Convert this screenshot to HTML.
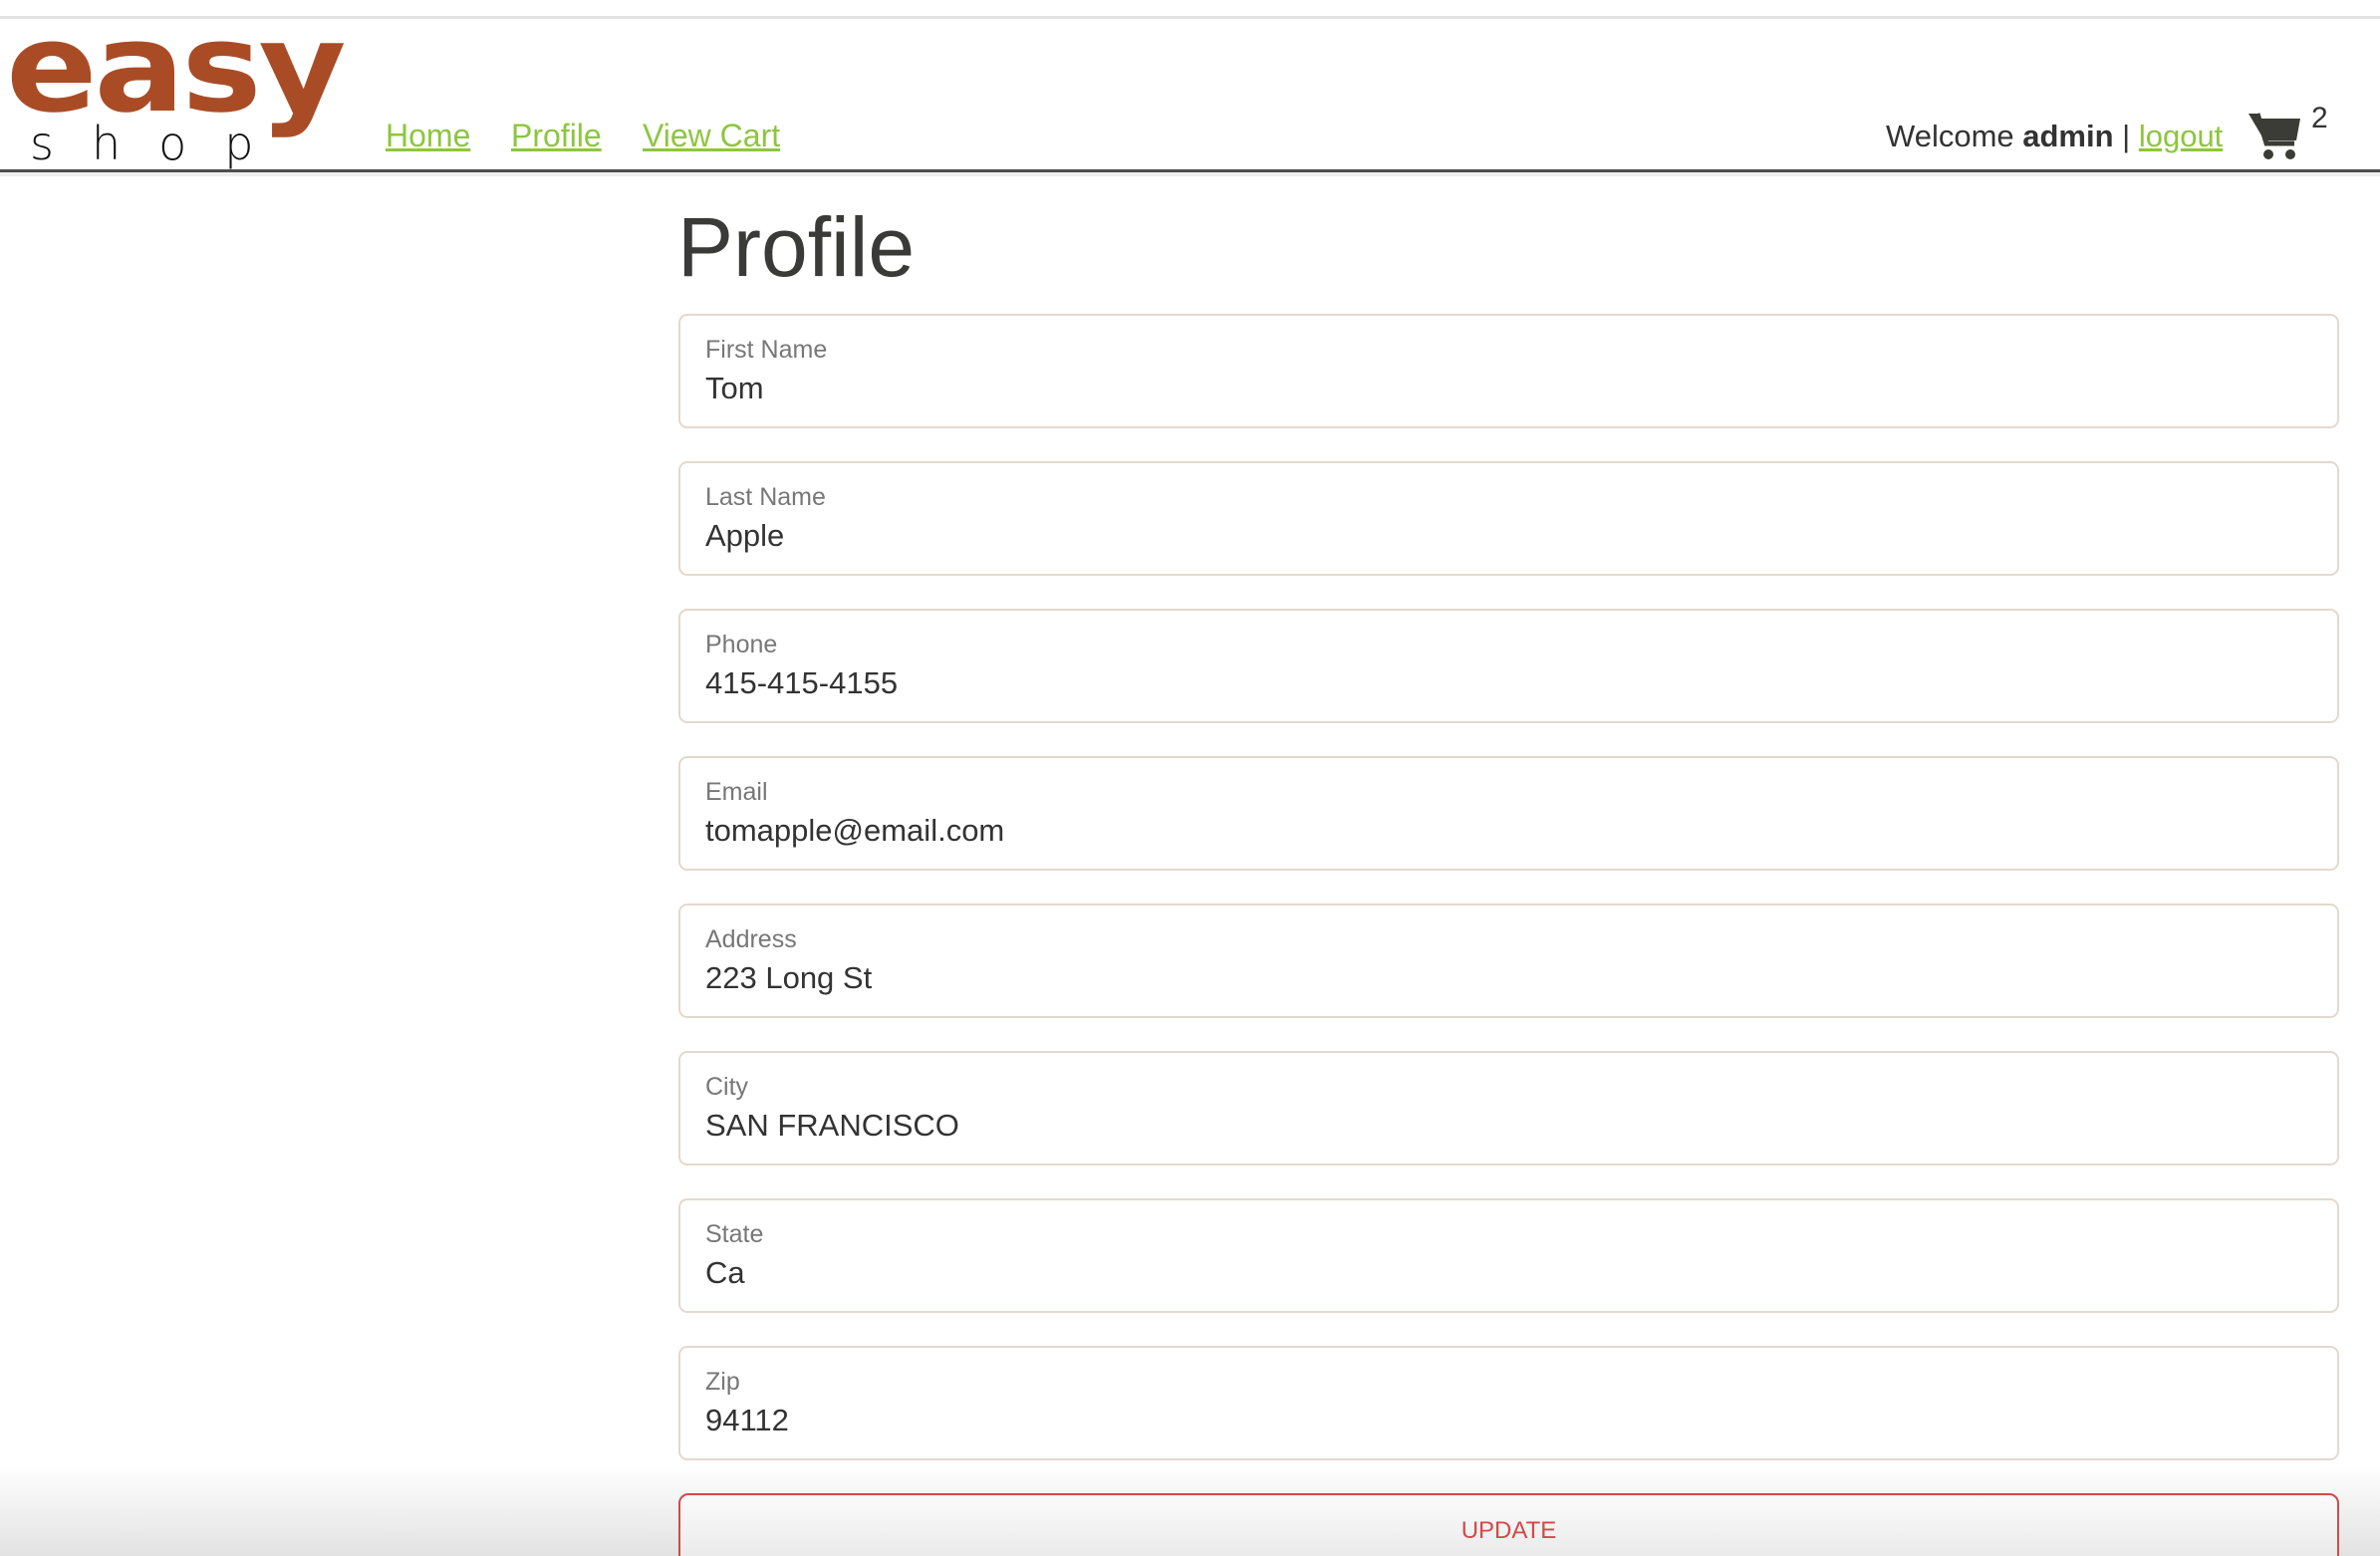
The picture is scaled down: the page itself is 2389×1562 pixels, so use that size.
<!DOCTYPE html>
<html><head><meta charset="utf-8"><style>
*{margin:0;padding:0;box-sizing:border-box}
html,body{width:2389px;height:1562px;overflow:hidden;background:#fff;font-family:"Liberation Sans",sans-serif;color:#333}
body{position:relative;background:linear-gradient(to bottom,#fff 0,#fff 1470px,#e2e2e2 1562px)}
.topline{position:absolute;left:0;top:16px;width:100%;height:3px;background:#e2e2e2}
.hdr{position:absolute;left:0;top:19px;width:100%;height:151px;background:#fff;overflow:hidden}
.hline{position:absolute;left:0;top:170px;width:100%;height:3px;background:#4d4d4d}
.hband{position:absolute;left:0;top:173px;width:100%;height:4px;background:#eee}
.easy{position:absolute;left:6px;top:-22px;font-size:124px;font-weight:bold;color:#a94c26;letter-spacing:-3px;font-family:"DejaVu Sans","Liberation Sans",sans-serif;transform:scaleX(1.09);transform-origin:left}
.shop{position:absolute;left:30px;top:98px;font-size:46px;color:#111;letter-spacing:38px;font-family:"DejaVu Sans",sans-serif;font-weight:300}
.nav{position:absolute;top:118px;font-size:32px;color:#8dc63f;text-decoration:underline}
.welcome{position:absolute;left:1893px;top:119px;font-size:31px;color:#333}
.welcome a{color:#8dc63f;text-decoration:underline}
.cnt{position:absolute;left:2320px;top:102px;font-size:30px;color:#333}
h1{position:absolute;left:680px;top:200px;font-size:84px;font-weight:normal;color:#3a3a38}
.f{position:absolute;left:681px;width:1667px;height:115px;border:2px solid #e3d9cd;border-radius:9px;background:#fff}
.f .l{position:absolute;left:25px;top:20px;font-size:25px;color:#777}
.f .v{position:absolute;left:25px;top:55px;font-size:31px;color:#333}
.btn{position:absolute;left:681px;top:1499px;width:1667px;height:90px;border:2px solid #d04a4a;border-radius:10px;background:linear-gradient(#fbfbfb,#e4e4e4);text-align:center;font-size:24px;color:#d04a4a;padding-top:22px}
</style></head><body>
<div class="topline"></div>
<div class="hdr">
<div class="easy">easy</div>
<div class="shop">shop</div>
</div>
<a class="nav" style="left:387px">Home</a>
<a class="nav" style="left:513px">Profile</a>
<a class="nav" style="left:645px">View Cart</a>
<div class="welcome">Welcome <b>admin</b> | <a>logout</a></div>
<svg style="position:absolute;left:2255px;top:110px" width="56" height="52" viewBox="0 0 56 52"><path d="M2 4h9l3 5h40l-4 22H18z" fill="#3c3c36"/><path d="M11 4l9 30h28" stroke="#3c3c36" stroke-width="5" fill="none"/><circle cx="22" cy="45" r="5" fill="#3c3c36"/><circle cx="44" cy="45" r="5" fill="#3c3c36"/></svg>
<div class="cnt">2</div>
<div class="hline"></div><div class="hband"></div>
<h1>Profile</h1>
<div class="f" style="top:315px"><div class="l">First Name</div><div class="v">Tom</div></div>
<div class="f" style="top:463px"><div class="l">Last Name</div><div class="v">Apple</div></div>
<div class="f" style="top:611px"><div class="l">Phone</div><div class="v">415-415-4155</div></div>
<div class="f" style="top:759px"><div class="l">Email</div><div class="v">tomapple@email.com</div></div>
<div class="f" style="top:907px"><div class="l">Address</div><div class="v">223 Long St</div></div>
<div class="f" style="top:1055px"><div class="l">City</div><div class="v">SAN FRANCISCO</div></div>
<div class="f" style="top:1203px"><div class="l">State</div><div class="v">Ca</div></div>
<div class="f" style="top:1351px"><div class="l">Zip</div><div class="v">94112</div></div>
<div class="btn">UPDATE</div>
</body></html>
